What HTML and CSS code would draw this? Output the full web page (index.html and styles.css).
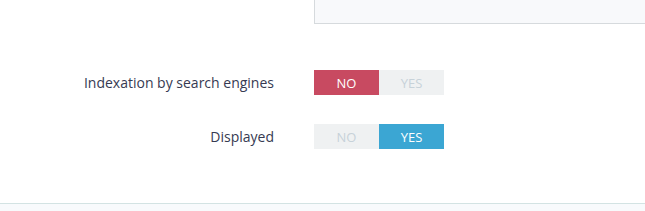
FILE: index.html
```html
<!DOCTYPE html>
<html>
    <head>
        <meta charset="UTF-8">
        <title>Options</title>
        <link rel="stylesheet" href="styles.css">
    </head>
    <body>
        <div class="form">
            <div class="row">
                <div class="label"></div>
                <div class="textarea"></div>
            </div>
            <div class="row row-switch first">
                <div class="label">Indexation by search engines</div>
                <div class="switch">
                    <span class="no active">NO</span>
                    <span class="yes">YES</span>
                </div>
            </div>
            <div class="row row-switch">
                <div class="label">Displayed</div>
                <div class="switch">
                    <span class="no">NO</span>
                    <span class="yes active">YES</span>
                </div>
            </div>
        </div>
        <div class="footer"></div>
    </body>
</html>
```

FILE: styles.css
```css
body{
    margin:0;
    font-family:"Open Sans","Liberation Sans",sans-serif;
    background:#fff;
    overflow:hidden;
}
.form{
    height:203px;
}
.row{
    display:flex;
    align-items:center;
}
.label{
    width:274px;
    margin-right:40px;
    text-align:right;
    font-size:14px;
    color:#363a52;
    flex-shrink:0;
}
.textarea{
    flex:1;
    height:23px;
    background:#f8f9fb;
    border:1px solid #d6dadd;
    border-top:none;
    border-right:none;
}
.row-switch{
    height:25px;
    margin-top:29px;
}
.row-switch.first{
    margin-top:46px;
}
.switch{
    display:flex;
    width:130px;
    height:25px;
}
.switch span{
    flex:1;
    display:flex;
    align-items:center;
    justify-content:center;
    font-size:13px;
    background:#eff1f2;
    color:#c7d2d9;
}
.switch .no.active{
    background:#c84a61;
    color:#fff;
}
.switch .yes.active{
    background:#3ba6d3;
    color:#fff;
}
.footer{
    height:8px;
    border-top:1px solid #d3e3e3;
    background:#f8fafc;
}
```
